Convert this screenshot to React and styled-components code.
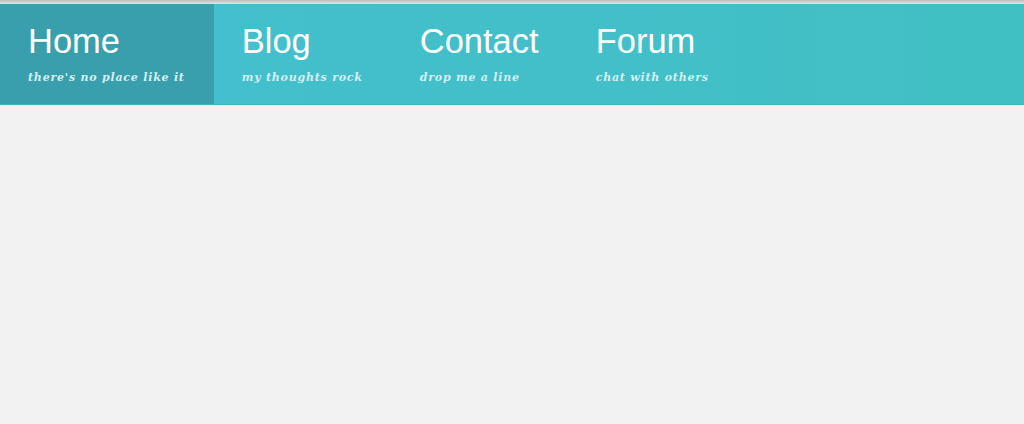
import React from 'react';
import styled, { createGlobalStyle } from 'styled-components';

const GlobalStyle = createGlobalStyle`
    html, body {
        margin: 0;
        padding: 0;
        background: #f2f2f2;
        height: 100%;
    }
    #root {
        min-height: 100vh;
        background: #f2f2f2;
    }
`

const TopStrip = styled.div`
    height: 4px;
    background: linear-gradient(#bdbdbd, #e4e4e4);
`

const NavBar = styled.nav`
    display: flex;
    height: 100px;
    background: linear-gradient(90deg, #45bfd0 0%, #42bfc8 60%, #41c0c3 100%);
    border-bottom: 1px solid #3fb3bb;
`

const NavItem = styled.a`
    display: flex;
    flex-direction: column;
    padding: 0 29px 0 28px;
    text-decoration: none;
    background: ${props => props.active ? '#3a9fac' : 'transparent'};
    cursor: pointer;
`

const Title = styled.span`
    font-family: "Liberation Sans", Arial, sans-serif;
    font-size: 34.5px;
    line-height: 1;
    color: #ffffff;
    margin-top: 20px;
`

const Subtitle = styled.span`
    font-family: "DejaVu Serif", "Liberation Serif", serif;
    font-style: italic;
    font-weight: bold;
    font-size: 11px;
    letter-spacing: 0.78px;
    color: #d4eff2;
    margin-top: 12px;
    white-space: nowrap;
`

const links = [
    { title: 'Home', sub: "there's no place like it", active: true },
    { title: 'Blog', sub: 'my thoughts rock' },
    { title: 'Contact', sub: 'drop me a line' },
    { title: 'Forum', sub: 'chat with others' },
];

function App() {
    return (
        <>
            <GlobalStyle />
            <TopStrip />
            <NavBar>
                {links.map(l => (
                    <NavItem key={l.title} active={l.active}>
                        <Title>{l.title}</Title>
                        <Subtitle>{l.sub}</Subtitle>
                    </NavItem>
                ))}
            </NavBar>
        </>
    );
}

export default App;
